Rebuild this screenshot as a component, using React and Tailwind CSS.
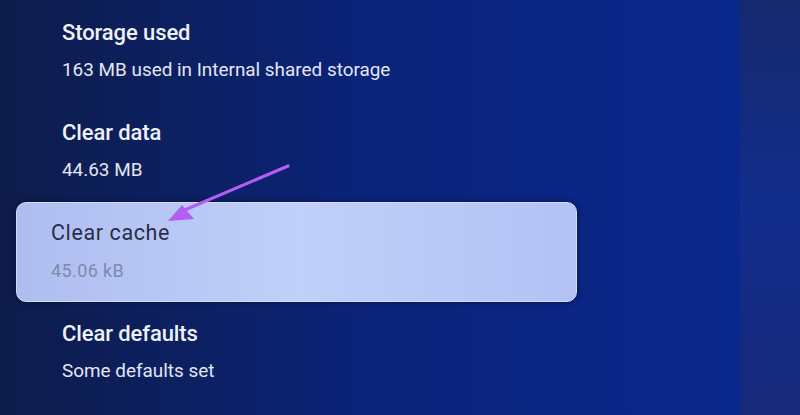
import React from 'react';

const font = { fontFamily: 'Roboto, "Noto Sans", sans-serif' };

function Item({ title, subtitle, className = '' }) {
  return (
    <div className={`ml-[62px] ${className}`}>
      <div className="text-[22px] leading-[28px] font-medium text-[#eef1f8] tracking-[-0.1px]">{title}</div>
      <div className="mt-[11px] text-[18.9px] leading-[24px] text-[#e2e6f2]">{subtitle}</div>
    </div>
  );
}

export default function App() {
  return (
    <div className="relative flex w-[800px] h-[415px] overflow-hidden" style={font}>
      <div className="flex-1 flex flex-col bg-linear-to-r from-[#0e1c4b] via-[#0a237a] to-[#0a278c] pt-[19px]">
        <Item title="Storage used" subtitle="163 MB used in Internal shared storage" />
        <Item title="Clear data" subtitle="44.63 MB" className="mt-[37px]" />
        <div className="ml-[16px] mt-[20px] w-[561px] h-[100px] rounded-[10px] border border-[#d4dcfa] bg-linear-to-r from-[#aebdf0] via-[#c0d0f8] to-[#b3c2f5] pl-[34px] pt-[17px] shadow-[0_0_6px_rgba(0,0,0,0.4)]">
          <div className="text-[21.5px] leading-[26px] text-[#282e46] tracking-[0.6px]">Clear cache</div>
          <div className="mt-[14px] text-[18px] leading-[22px] text-[#7e8aab] tracking-[0.4px]">45.06 kB</div>
        </div>
        <Item title="Clear defaults" subtitle="Some defaults set" className="mt-[18px]" />
      </div>
      <div className="w-[60px] bg-linear-to-b from-[#15296e] via-[#122d8c] to-[#16297a]" />
      <svg className="absolute left-0 top-0 pointer-events-none" width="800" height="415">
        <line x1="288" y1="166" x2="180" y2="212" stroke="#b35ef2" strokeWidth="3.2" strokeLinecap="round" />
        <polygon points="168,221 182,205 194,219" fill="#b35ef2" />
      </svg>
    </div>
  );
}
